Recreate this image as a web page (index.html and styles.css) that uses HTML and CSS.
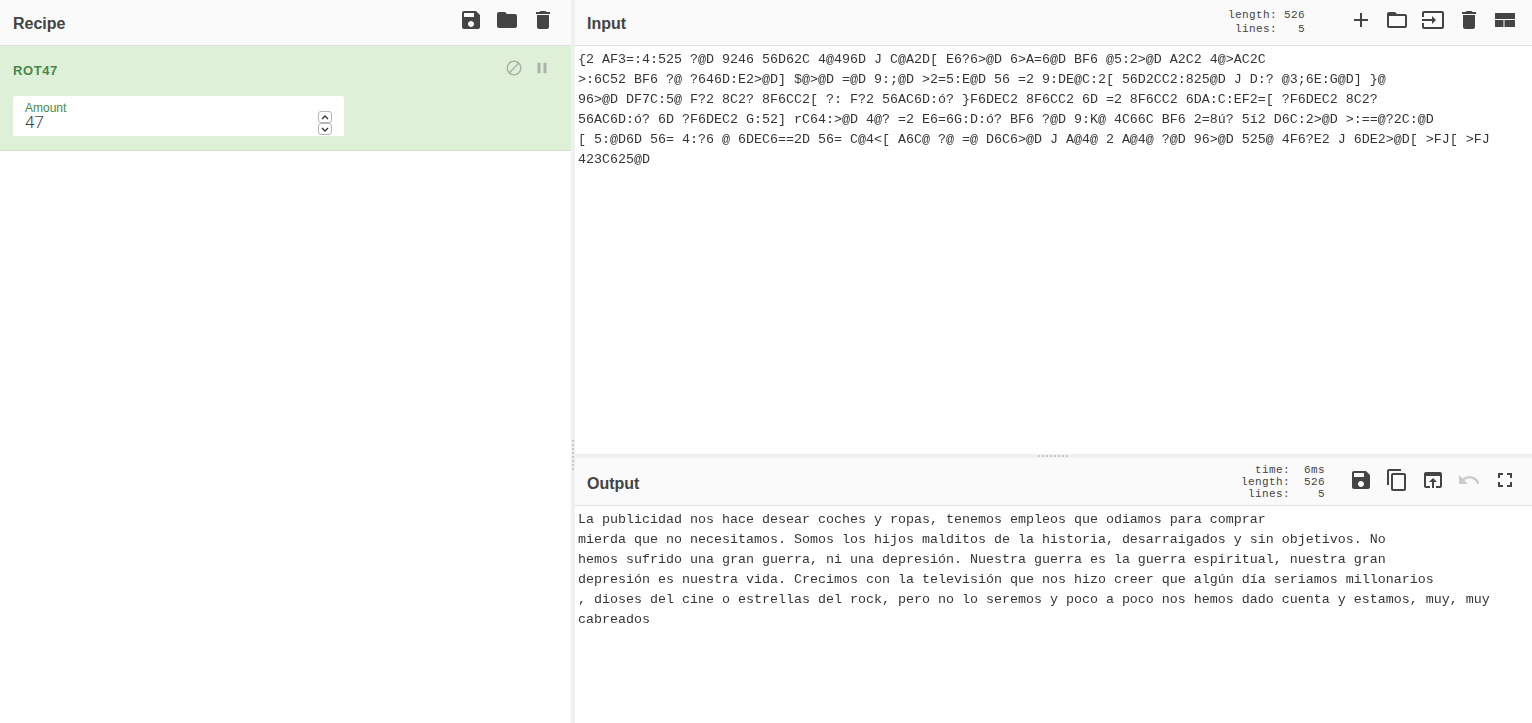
FILE: index.html
```html
<!DOCTYPE html>
<html lang="en">
<head>
  <meta charset="UTF-8">
  <title>CyberChef</title>
  <link rel="stylesheet" href="styles.css">
</head>
<body>
  <svg class="icon-defs" width="0" height="0">
    <symbol id="i-save" viewBox="0 0 24 24"><path d="M17 3H5c-1.11 0-2 .9-2 2v14c0 1.1.89 2 2 2h14c1.1 0 2-.9 2-2V7l-4-4zm-5 16c-1.66 0-3-1.34-3-3s1.34-3 3-3 3 1.34 3 3-1.34 3-3 3zm3-10H5V5h10v4z"/></symbol>
    <symbol id="i-folder" viewBox="0 0 24 24"><path d="M10 4H4c-1.1 0-1.99.9-1.99 2L2 18c0 1.1.9 2 2 2h16c1.1 0 2-.9 2-2V8c0-1.1-.9-2-2-2h-8l-2-2z"/></symbol>
    <symbol id="i-folder-open" viewBox="0 0 24 24"><path d="M20 6h-8l-2-2H4c-1.1 0-1.99.9-1.99 2L2 18c0 1.1.9 2 2 2h16c1.1 0 2-.9 2-2V8c0-1.1-.9-2-2-2zm0 12H4V8h16v10z"/></symbol>
    <symbol id="i-delete" viewBox="0 0 24 24"><path d="M6 19c0 1.1.9 2 2 2h8c1.1 0 2-.9 2-2V7H6v12zM19 4h-3.5l-1-1h-5l-1 1H5v2h14V4z"/></symbol>
    <symbol id="i-add" viewBox="0 0 24 24"><path d="M19 13h-6v6h-2v-6H5v-2h6V5h2v6h6v2z"/></symbol>
    <symbol id="i-input" viewBox="0 0 24 24"><path d="M21 3.01H3c-1.1 0-2 .9-2 2V9h2V4.99h18v14.03H3V15H1v4.01c0 1.1.9 1.98 2 1.98h18c1.1 0 2-.88 2-1.98v-14c0-1.11-.9-2-2-2zM11 16l4-4-4-4v3H1v2h10v3z"/></symbol>
    <symbol id="i-view" viewBox="0 0 24 24"><path d="M2 19h8.500v-7H2v7zm9.500 0H22v-7H11.500v7zM2 5v6h20V5H2z"/></symbol>
    <symbol id="i-copy" viewBox="0 0 24 24"><path d="M16 1H4c-1.1 0-2 .9-2 2v14h2V3h12V1zm3 4H8c-1.1 0-2 .9-2 2v14c0 1.1.9 2 2 2h11c1.1 0 2-.9 2-2V7c0-1.100-.9-2-2-2zm0 16H8V7h11v14z"/></symbol>
    <symbol id="i-open" viewBox="0 0 24 24"><path d="M19 4H5c-1.11 0-2 .9-2 2v12c0 1.1.89 2 2 2h4v-2H5V8h14v10h-4v2h4c1.1 0 2-.9 2-2V6c0-1.1-.89-2-2-2zm-7 6l-4 4h3v6h2v-6h3l-4-4z"/></symbol>
    <symbol id="i-undo" viewBox="0 0 24 24"><path d="M12.500 8c-2.650 0-5.050.99-6.900 2.600L2 7v9h9l-3.620-3.620c1.390-1.160 3.160-1.880 5.120-1.880 3.540 0 6.550 2.310 7.600 5.500l2.370-.78C21.080 11.030 17.150 8 12.500 8z"/></symbol>
    <symbol id="i-fullscreen" viewBox="0 0 24 24"><path d="M7 14H5v5h5v-2H7v-3zm-2-4h2V7h3V5H5v5zm12 7h-3v2h5v-5h-2v3zM14 5v2h3v3h2V5h-5z"/></symbol>
    <symbol id="i-block" viewBox="0 0 24 24"><path d="M12 2C6.480 2 2 6.480 2 12s4.480 10 10 10 10-4.480 10-10S17.520 2 12 2zM4 12c0-4.420 3.580-8 8-8 1.850 0 3.550.63 4.900 1.690L5.690 16.900C4.630 15.550 4 13.850 4 12zm8 8c-1.850 0-3.550-.63-4.900-1.690L18.310 7.100C19.370 8.450 20 10.150 20 12c0 4.420-3.580 8-8 8z"/></symbol>
    <symbol id="i-pause" viewBox="0 0 24 24"><path d="M6 19h4V5H6v14zm8-14v14h4V5h-4z"/></symbol>
  </svg>

  <div class="app">
    <section class="recipe">
      <header class="bar bar-recipe">
        <h2 class="bar-title">Recipe</h2>
        <div class="bar-tools">
          <svg class="tool"><use href="#i-save"/></svg>
          <svg class="tool"><use href="#i-folder"/></svg>
          <svg class="tool"><use href="#i-delete"/></svg>
        </div>
      </header>
      <div class="op">
        <div class="op-head">
          <span class="op-name">ROT47</span>
          <div class="op-tools">
            <svg class="op-tool"><use href="#i-block"/></svg>
            <svg class="op-tool"><use href="#i-pause"/></svg>
          </div>
        </div>
        <div class="field">
          <div class="field-text">
            <label class="field-label">Amount</label>
            <span class="field-value">47</span>
          </div>
          <div class="spinner">
            <span class="spin"><svg viewBox="0 0 8 5"><path d="M1 4l3-3 3 3"/></svg></span>
            <span class="spin"><svg viewBox="0 0 8 5"><path d="M1 1l3 3 3-3"/></svg></span>
          </div>
        </div>
      </div>
    </section>

    <div class="gutter-v"><span class="grip-v"></span></div>

    <main class="io">
      <section class="pane pane-input">
        <header class="bar">
          <h2 class="bar-title">Input</h2>
          <div class="info info-input">
            <div class="info-labels">length:<br>lines:</div>
            <div class="info-values">526<br>5</div>
          </div>
          <div class="bar-tools">
            <svg class="tool"><use href="#i-add"/></svg>
            <svg class="tool"><use href="#i-folder-open"/></svg>
            <svg class="tool"><use href="#i-input"/></svg>
            <svg class="tool"><use href="#i-delete"/></svg>
            <svg class="tool"><use href="#i-view"/></svg>
          </div>
        </header>
        <pre class="text text-input">{2 AF3=:4:525 ?@D 9246 56D62C 4@496D J C@A2D[ E6?6>@D 6>A=6@D BF6 @5:2>@D A2C2 4@>AC2C
>:6C52 BF6 ?@ ?646D:E2>@D] $@>@D =@D 9:;@D >2=5:E@D 56 =2 9:DE@C:2[ 56D2CC2:825@D J D:? @3;6E:G@D] }@
96>@D DF7C:5@ F?2 8C2? 8F6CC2[ ?: F?2 56AC6D:ó? }F6DEC2 8F6CC2 6D =2 8F6CC2 6DA:C:EF2=[ ?F6DEC2 8C2?
56AC6D:ó? 6D ?F6DEC2 G:52] rC64:>@D 4@? =2 E6=6G:D:ó? BF6 ?@D 9:K@ 4C66C BF6 2=8ú? 5í2 D6C:2>@D >:==@?2C:@D
[ 5:@D6D 56= 4:?6 @ 6DEC6==2D 56= C@4&lt;[ A6C@ ?@ =@ D6C6>@D J A@4@ 2 A@4@ ?@D 96>@D 525@ 4F6?E2 J 6DE2>@D[ >FJ[ >FJ
423C625@D</pre>
      </section>

      <div class="gutter-h"><span class="grip-h"></span></div>

      <section class="pane pane-output">
        <header class="bar bar-output">
          <h2 class="bar-title">Output</h2>
          <div class="info info-output">
            <div class="info-labels">time:<br>length:<br>lines:</div>
            <div class="info-values">6ms<br>526<br>5</div>
          </div>
          <div class="bar-tools">
            <svg class="tool"><use href="#i-save"/></svg>
            <svg class="tool"><use href="#i-copy"/></svg>
            <svg class="tool"><use href="#i-open"/></svg>
            <svg class="tool tool-off"><use href="#i-undo"/></svg>
            <svg class="tool"><use href="#i-fullscreen"/></svg>
          </div>
        </header>
        <pre class="text text-output">La publicidad nos hace desear coches y ropas, tenemos empleos que odiamos para comprar
mierda que no necesitamos. Somos los hijos malditos de la historia, desarraigados y sin objetivos. No
hemos sufrido una gran guerra, ni una depresión. Nuestra guerra es la guerra espiritual, nuestra gran
depresión es nuestra vida. Crecimos con la televisión que nos hizo creer que algún día seriamos millonarios
, dioses del cine o estrellas del rock, pero no lo seremos y poco a poco nos hemos dado cuenta y estamos, muy, muy
cabreados</pre>
      </section>
    </main>
  </div>
</body>
</html>
```

FILE: styles.css
```css
* {
  box-sizing: border-box;
}

html, body {
  height: 100%;
}

body {
  margin: 0;
  background: #fff;
  color: #424242;
  font-family: "Liberation Sans", Arial, sans-serif;
  overflow: hidden;
}

.icon-defs {
  position: absolute;
}

.app {
  display: flex;
  height: 100%;
  opacity: 0.99;
}

.recipe {
  width: 571px;
  flex: none;
}

.gutter-v {
  width: 4px;
  flex: none;
  background: #f0f0f0;
}

.grip-v {
  display: block;
  width: 2px;
  height: 32px;
  margin: 440px 0 0 1px;
  background: repeating-linear-gradient(to bottom, #c8c8c8 0 2px, transparent 2px 4px);
}

.io {
  flex: 1;
  min-width: 0;
  display: flex;
  flex-direction: column;
}

.bar {
  height: 46px;
  flex: none;
  display: flex;
  align-items: flex-start;
  padding-right: 9px;
  background: #fafafa;
  border-bottom: 1px solid #e0e0e0;
}

.bar-recipe {
  padding-right: 10px;
}

.bar-output {
  height: 48px;
}

.bar-title {
  margin: 0;
  padding: 15px 0 0 12px;
  font-size: 16px;
  line-height: 17px;
  font-weight: bold;
  color: #424242;
  flex: 1;
}

.bar-recipe .bar-title {
  padding-left: 13px;
}

.bar-output .bar-title {
  padding-top: 17px;
}

.bar-tools {
  display: flex;
  padding-top: 8px;
}

.bar-output .bar-tools {
  padding-top: 10px;
}

.tool {
  width: 36px;
  height: 24px;
  fill: #424242;
}

.tool-off {
  fill: #ccc;
}

.info {
  display: flex;
  font-family: "Liberation Mono", monospace;
  font-size: 11px;
  letter-spacing: 0.4px;
  color: #424242;
  text-align: right;
}

.info-input {
  gap: 7px;
  margin-right: 38px;
  padding-top: 8px;
  line-height: 14px;
}

.info-output {
  gap: 14px;
  margin-right: 18px;
  padding-top: 6px;
  line-height: 12px;
}

.info-values {
  width: 21px;
}

.op {
  height: 105px;
  background: #dff0d8;
  border-bottom: 1px solid #d0e4c8;
  padding: 0 13px;
}

.op-head {
  height: 50px;
  display: flex;
  justify-content: space-between;
}

.op-name {
  padding-top: 17px;
  font-size: 13px;
  line-height: 15px;
  font-weight: bold;
  letter-spacing: 0.6px;
  color: #468847;
}

.op-tools {
  display: flex;
  gap: 10px;
  padding: 13px 7px 0 0;
}

.op-tool {
  width: 18px;
  height: 18px;
  fill: #aab0a8;
}

.field {
  width: 331px;
  height: 40px;
  background: #fff;
  border-radius: 3px 3px 0 0;
  display: flex;
  justify-content: space-between;
  padding: 6px 12px 0 12px;
}

.field-label {
  display: block;
  font-size: 12px;
  line-height: 12px;
  color: #468847;
}

.field-value {
  display: block;
  font-family: Roboto, sans-serif;
  font-size: 17px;
  font-weight: 300;
  line-height: 16px;
  color: #424242;
}

.spinner {
  display: flex;
  flex-direction: column;
  padding-top: 9px;
}

.spin {
  width: 14px;
  height: 12px;
  border: 1px solid #b5b5b5;
  border-radius: 3px;
  background: #fff;
  display: flex;
  align-items: center;
  justify-content: center;
}

.spin svg {
  width: 8px;
  height: 5px;
  fill: none;
  stroke: #333;
  stroke-width: 1.4;
}

.pane-input {
  flex: 1;
  min-height: 0;
}

.pane-output {
  height: 265px;
  flex: none;
}

.gutter-h {
  height: 4px;
  flex: none;
  background: #f0f0f0;
  display: flex;
  justify-content: center;
  padding-top: 1px;
}

.grip-h {
  width: 32px;
  height: 2px;
  background: repeating-linear-gradient(to right, #c8c8c8 0 2px, transparent 2px 4px);
}

.text {
  margin: 0;
  padding: 4px 3px 3px;
  font-family: "Liberation Mono", monospace;
  font-size: 13.33px;
  line-height: 20px;
  color: #333;
  white-space: pre;
  overflow: hidden;
}
```
